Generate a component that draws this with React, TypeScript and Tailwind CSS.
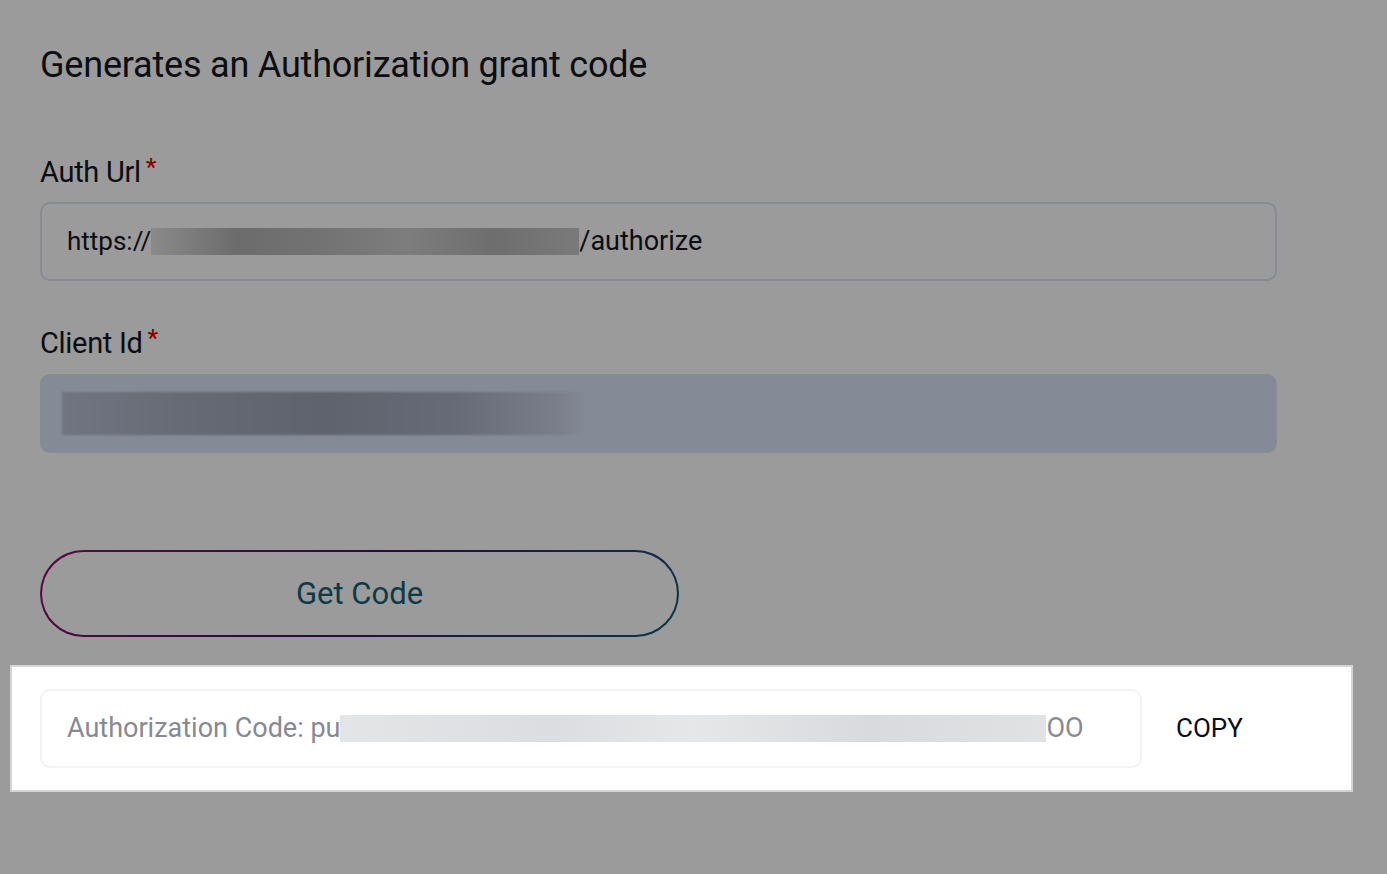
import React from "react";

const font = { fontFamily: "Roboto, 'Liberation Sans', sans-serif" };

function Label({ text }: { text: string }) {
  return (
    <div className="flex items-start text-[29px] leading-[32px] tracking-[-0.3px] text-[#0b0d12]">
      <span>{text}</span>
      <span className="ml-[5px] text-[24px] leading-[22px] font-medium text-[#8a0000]">*</span>
    </div>
  );
}

export default function App() {
  return (
    <div
      className="min-h-screen w-full bg-[#9b9b9b] pt-[44px] antialiased"
      style={font}
    >
      <div className="px-10">
        {/* Heading */}
        <h1 className="text-[36px] leading-[42px] font-normal tracking-[-0.2px] text-[#0b0d12]">
          Generates an Authorization grant code
        </h1>

        {/* Auth Url */}
        <div className="mt-[70px]">
          <Label text="Auth Url" />
          <div className="mt-[14px] flex h-[79px] w-[1237px] items-center rounded-[10px] border-2 border-[#878b92] px-[25px] text-[26px] text-[#0b0d12]">
            <span>https://</span>
            <span className="h-[27px] w-[428px] bg-[linear-gradient(90deg,#8a8a8a_0%,#6c6c6c_20%,#737373_40%,#7d7d7d_60%,#6e6e6e_80%,#7a7a7a_100%)]" />
            <span className="text-[27px]">/authorize</span>
          </div>
        </div>

        {/* Client Id */}
        <div className="mt-[46px]">
          <Label text="Client Id" />
          <div className="mt-[15px] flex h-[79px] w-[1237px] items-center rounded-[10px] border-2 border-[#858a93] bg-[#848a96] px-[20px]">
            <span className="h-[43px] w-[524px] bg-[linear-gradient(90deg,#707581_0%,#656a75_25%,#5e636e_50%,#666b77_75%,#7a7f8b_95%,#848a96_100%)] blur-[1px]" />
          </div>
        </div>

        {/* Get Code */}
        <div className="mt-[97px] h-[87px] w-[639px] rounded-full bg-[linear-gradient(135deg,#5a0a3e,#2a0a44_50%,#06384a)] p-[2px]">
          <button className="flex h-full w-full items-center justify-center rounded-full bg-[#9b9b9b] pt-[2px] text-[31px] text-[#0c3a48]">
            Get Code
          </button>
        </div>
      </div>

      {/* Highlighted result */}
      <div className="mx-[10px] mt-[28px] flex h-[127px] w-[1343px] items-center border-2 border-[#d4d4d4] bg-white pl-[28px]">
        <div className="flex h-[79px] w-[1102px] items-center rounded-[10px] border-2 border-[#f3f3f4] px-[25px] text-[27px] text-[#868a92]">
          <span>Authorization Code: pu</span>
          <span className="h-[27px] w-[706px] bg-[linear-gradient(90deg,#e4e5e7,#dcdde0_30%,#e6e7e9_50%,#d9dadd_75%,#e1e2e4)]" />
          <span>OO</span>
        </div>
        <button className="ml-[34px] text-[26px] text-[#0a0f1a]">COPY</button>
      </div>
    </div>
  );
}
